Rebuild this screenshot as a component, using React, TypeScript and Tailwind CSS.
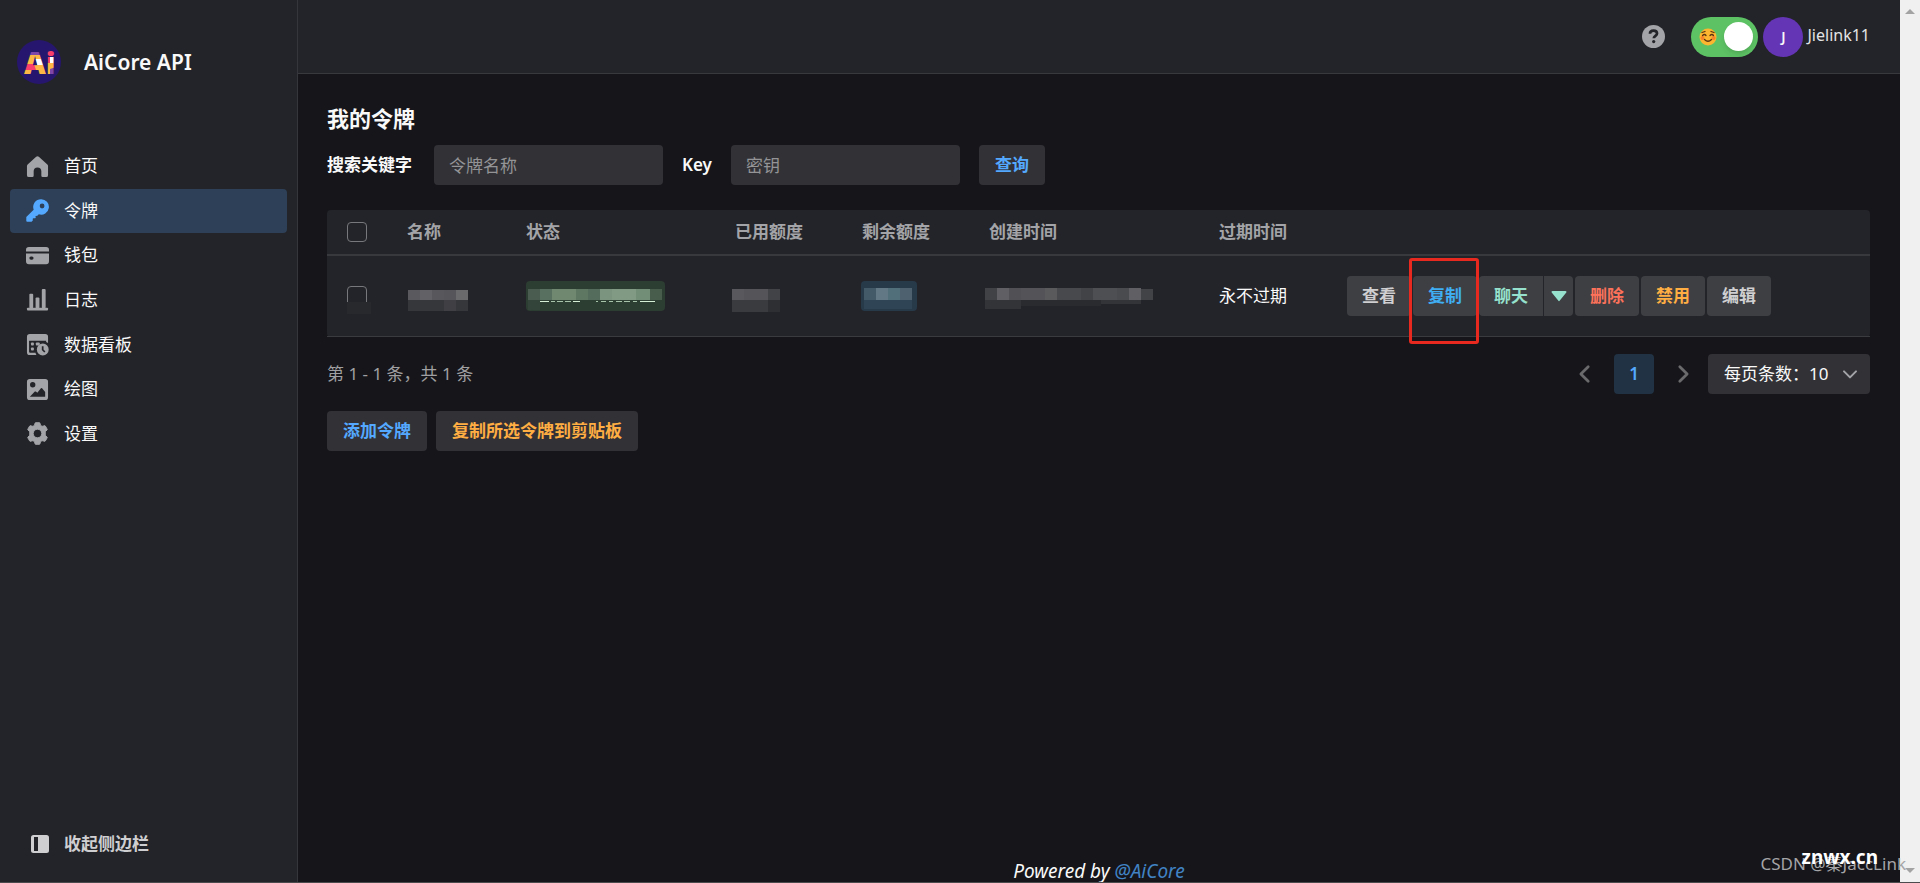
import React, { useState } from 'react';
import clsx from 'clsx';

type IconProps = { className?: string };

function IconHome({ className }: IconProps) {
  return (
    <svg viewBox="0 0 24 24" className={className} fill="currentColor">
      <path d="M10.600 1.900a2 2 0 0 1 2.800 0l8.900 8c.5.4.7 1 .7 1.600V21a2 2 0 0 1-2 2h-3.600a1.400 1.400 0 0 1-1.400-1.400V17a4 4 0 0 0-8 0v4.600A1.400 1.400 0 0 1 6.600 23H3a2 2 0 0 1-2-2v-9.500c0-.6.3-1.200.7-1.600z" />
    </svg>
  );
}

function IconKey({ className }: IconProps) {
  return (
    <svg viewBox="0 0 24 24" className={className} fill="currentColor">
      <path
        fillRule="evenodd"
        d="M15.700.3a8 8 0 1 1-2.300 15.600l-1.900 1.900-1.100-.4-.5.5.3 1.600-.6.6-1.900-.1-.7.7.1 1.700-1.300 1.300H1.300a1 1 0 0 1-1-1v-3.900L8 11.100A8 8 0 0 1 15.700.3zm1.100 4.500a2.500 2.500 0 1 0 0 5 2.500 2.500 0 0 0 0-5z"
      />
    </svg>
  );
}

function IconWallet({ className }: IconProps) {
  return (
    <svg viewBox="0 0 24 24" className={className} fill="currentColor">
      <path d="M3 3h18a3 3 0 0 1 3 3v1.800H0V6a3 3 0 0 1 3-3z" />
      <path
        fillRule="evenodd"
        d="M0 9.800h24V18a3 3 0 0 1-3 3H3a3 3 0 0 1-3-3zm5.200 3.200a1.700 1.700 0 0 0 0 3.400h1a1.700 1.700 0 0 0 0-3.400z"
      />
    </svg>
  );
}

function IconHistogram({ className }: IconProps) {
  return (
    <svg viewBox="0 0 24 24" className={className} fill="currentColor">
      <rect x="1" y="20.500" width="22" height="3" rx="1" />
      <rect x="3.500" y="6" width="4" height="15" rx="1" />
      <rect x="10" y="10" width="4" height="11" rx="1" />
      <rect x="16.500" y="1" width="4" height="20" rx="1" />
    </svg>
  );
}

function IconCalendarClock({ className }: IconProps) {
  return (
    <svg viewBox="0 0 24 24" className={className} fill="currentColor">
      <path
        fillRule="evenodd"
        d="M4 1h16a3 3 0 0 1 3 3v6.500a8 8 0 0 0-2-1V8H3.200v11.200c0 .9.6 1.500 1.500 1.500h5.200c.2.800.6 1.600 1 2.300H4a3 3 0 0 1-3-3V4a3 3 0 0 1 3-3z"
      />
      <rect x="5.200" y="10" width="3" height="3" rx=".8" />
      <rect x="10.300" y="10" width="4" height="3" rx=".8" />
      <rect x="5.200" y="15.200" width="3" height="3" rx=".8" />
      <path
        fillRule="evenodd"
        d="M17.500 11a6.200 6.200 0 1 1 0 12.400 6.200 6.200 0 0 1 0-12.400zm-1 2.800v4l2.500 2.600 1.300-1.200-2-2.100v-3.300z"
      />
    </svg>
  );
}

function IconImage({ className }: IconProps) {
  return (
    <svg viewBox="0 0 24 24" className={className} fill="currentColor">
      <path
        fillRule="evenodd"
        d="M4 1h16a3 3 0 0 1 3 3v16a3 3 0 0 1-3 3H4a3 3 0 0 1-3-3V4a3 3 0 0 1 3-3zm3 3.200a2.800 2.800 0 1 0 0 5.600 2.800 2.800 0 0 0 0-5.600zM4 19.500h16v-5l-3.200-3.700a.8.8 0 0 0-1.200 0l-3.800 4.600-1.500-1.200a.9.9 0 0 0-1.100 0z"
      />
    </svg>
  );
}

function IconSetting({ className }: IconProps) {
  return (
    <svg viewBox="0 0 24 24" className={className} fill="currentColor">
      <path
        fillRule="evenodd"
        stroke="currentColor"
        strokeLinejoin="round"
        d="M9.600.9a11.500 11.500 0 0 1 4.800 0l.9 2.800 1.500.8 3-.7c1.100 1.200 1.900 2.600 2.400 4.200l-2.100 2.200v3.600l2.100 2.200c-.5 1.600-1.300 3-2.400 4.200l-3-.7-1.500.8-.9 2.800a11.500 11.500 0 0 1-4.800 0l-.9-2.800-1.500-.8-3 .7A11.500 11.500 0 0 1 1.800 16l2.100-2.200v-3.600L1.800 8c.5-1.600 1.300-3 2.400-4.200l3 .7 1.500-.8zM12 7.500a4.500 4.500 0 1 0 0 9 4.500 4.500 0 0 0 0-9z"
      />
    </svg>
  );
}

function IconSidebar({ className }: IconProps) {
  return (
    <svg viewBox="0 0 18 18" className={className} fill="currentColor">
      <path
        fillRule="evenodd"
        d="M2.500 0h13A2.500 2.500 0 0 1 18 2.500v13a2.500 2.500 0 0 1-2.500 2.500h-13A2.500 2.500 0 0 1 0 15.500v-13A2.500 2.500 0 0 1 2.500 0zM3 2v14h4V2z"
      />
    </svg>
  );
}

function IconHelp({ className }: IconProps) {
  return (
    <svg viewBox="0 0 24 24" className={className}>
      <circle cx="12" cy="12" r="12" fill="currentColor" />
      <path
        d="M8.300 9.200c0-2 1.600-3.400 3.700-3.400s3.700 1.200 3.700 3.100c0 2.400-3.400 2.500-3.400 5"
        fill="none"
        stroke="#232429"
        strokeWidth="2.800"
      />
      <circle cx="12.200" cy="17.300" r="1.700" fill="#232429" />
    </svg>
  );
}

function Chevron({ className, d }: { className?: string; d: string }) {
  return (
    <svg
      viewBox="0 0 24 24"
      className={className}
      fill="none"
      stroke="currentColor"
      strokeWidth="3"
      strokeLinecap="round"
      strokeLinejoin="round"
    >
      <path d={d} />
    </svg>
  );
}

function Logo() {
  return (
    <svg viewBox="0 0 44 44" className="size-11 shrink-0" role="img" aria-label="AiCore">
      <defs>
        <pattern id="logo-fill" patternUnits="userSpaceOnUse" width="44" height="44">
          <rect width="44" height="44" fill="#fcb745" />
          <rect width="29" height="15" fill="#7d46a8" />
          <path d="M18 19h8l3 6h-9z" fill="#fff" />
          <path d="M0 24h17l2 6H0z" fill="#fb3f6c" />
          <rect x="29" width="15" height="16" fill="#fb3f6c" />
          <rect x="29" y="16" width="4" height="7" fill="#fb3f6c" />
          <rect x="33" y="16" width="11" height="7" fill="#fff" />
          <path d="M33 29l6-2v10h-6z" fill="#7d46a8" />
        </pattern>
      </defs>
      <circle cx="22" cy="22" r="22" fill="#27166d" />
      <text x="7" y="34" fontSize="30" fontWeight="800" fontFamily="Open Sans, sans-serif" fill="url(#logo-fill)">
        Ai
      </text>
    </svg>
  );
}

const NAV_ITEMS = [
  { label: '首页', icon: IconHome },
  { label: '令牌', icon: IconKey },
  { label: '钱包', icon: IconWallet },
  { label: '日志', icon: IconHistogram },
  { label: '数据看板', icon: IconCalendarClock },
  { label: '绘图', icon: IconImage },
  { label: '设置', icon: IconSetting },
];

function Sidebar() {
  const [active, setActive] = useState('令牌');

  return (
    <aside className="flex w-[298px] shrink-0 flex-col border-r border-[#35363b] bg-[#232429] px-[10px]">
      <div className="mt-10 flex items-center gap-[23px] pl-[7px]">
        <Logo />
        <span className="text-[21px] leading-8 font-semibold text-[#f9f9f9]">AiCore API</span>
      </div>
      <nav className="mt-[60px] grid h-78 auto-rows-fr">
        {NAV_ITEMS.map(({ label, icon: Icon }) => (
          <a
            key={label}
            href="#"
            onClick={(e) => {
              e.preventDefault();
              setActive(label);
            }}
            className={clsx(
              'flex items-center gap-[15px] rounded-[4px] pl-4 text-[#f9f9f9]',
              active === label && 'bg-[#2e4057]'
            )}
          >
            <Icon className={clsx('size-[23px]', active === label ? 'text-[#54a9ff]' : 'text-[#a3a4a7]')} />
            {label}
          </a>
        ))}
      </nav>
      <button className="mt-auto mb-[26px] flex items-center gap-[15px] pl-[21px] font-bold text-[#cfcfd1]">
        <IconSidebar className="size-[18px]" />
        收起侧边栏
      </button>
    </aside>
  );
}

function Header() {
  return (
    <header className="flex h-[74px] items-center justify-end border-b border-[#38393d] bg-[#232429] pr-[30px]">
      <button aria-label="帮助" className="mr-[26px] text-[#a3a4a7]">
        <IconHelp className="size-[23px]" />
      </button>
      <label className="relative mr-[5px] block h-10 w-[67px]">
        <input
          type="checkbox"
          defaultChecked
          aria-label="主题"
          className="h-10 w-[67px] appearance-none rounded-full bg-[#5dc264]"
        />
        <svg viewBox="0 0 18 18" className="pointer-events-none absolute top-[11px] left-2 size-[18px]">
          <circle cx="9" cy="9" r="8.500" fill="#fdb62f" />
          <circle cx="3.500" cy="10" r="2" fill="#f7832b" />
          <circle cx="14.500" cy="10" r="2" fill="#f7832b" />
          <path
            d="M3 4.500l3-1M15 4.500l-3-1M3.500 7.500q2-2 3.500 0M11 7.500q2-2 3.500 0M5.500 11.500q3.500 3.500 7 0"
            fill="none"
            stroke="#5a3413"
            strokeWidth="1.300"
            strokeLinecap="round"
          />
        </svg>
        <span className="pointer-events-none absolute top-[5px] right-[5px] size-[29px] rounded-full bg-white shadow-md" />
      </label>
      <span className="mr-1 flex size-10 items-center justify-center rounded-full bg-[#6435b5] text-sm font-semibold text-[#f9f9f9]">
        J
      </span>
      <span className="pb-1 text-base text-[#e4e4e6]">Jielink11</span>
    </header>
  );
}

type Block = [x: number, y: number, w: number, h: number, color: string];

/** Mosaic that hides a private value. */
function Mosaic({ width, height, blocks, className }: { width: number; height: number; blocks: Block[]; className?: string }) {
  return (
    <svg
      width={width}
      height={height}
      viewBox={`0 0 ${width} ${height}`}
      shapeRendering="crispEdges"
      aria-hidden="true"
      className={className}
    >
      {blocks.map(([x, y, w, h, color]) => (
        <rect key={`${x}-${y}`} x={x} y={y} width={w} height={h} fill={color} />
      ))}
    </svg>
  );
}

const NAME_BLOCKS: Block[] = [
  [1, 0, 12, 10, '#5a5a5e'],
  [13, 0, 12, 10, '#626266'],
  [25, 0, 12, 10, '#58585c'],
  [37, 0, 12, 10, '#56565a'],
  [49, 0, 12, 10, '#6a6a6d'],
  [1, 10, 36, 11, '#36373b'],
  [37, 10, 12, 11, '#404044'],
  [49, 10, 12, 11, '#36373b'],
];

const STATUS_BLOCKS: Block[] = [
  [2, 8, 12, 11, '#4a5c50'],
  [14, 8, 12, 11, '#587060'],
  [26, 8, 24, 11, '#70886f'],
  [50, 8, 12, 11, '#5d7763'],
  [62, 8, 12, 11, '#536c5b'],
  [74, 8, 12, 11, '#7b9480'],
  [86, 8, 24, 11, '#809a84'],
  [110, 8, 14, 11, '#738e76'],
  [124, 8, 12, 11, '#495d4d'],
  [2, 19, 12, 10, '#33453a'],
  [14, 20, 9, 1, '#d4efd6'],
  [25, 20, 4, 1, '#a7c4aa'],
  [31, 20, 6, 1, '#a7c4aa'],
  [39, 20, 6, 1, '#a7c4aa'],
  [47, 20, 7, 1, '#d4efd6'],
  [70, 20, 2, 1, '#a7c4aa'],
  [75, 20, 5, 1, '#a7c4aa'],
  [83, 20, 4, 1, '#a7c4aa'],
  [90, 20, 6, 1, '#a7c4aa'],
  [98, 20, 6, 1, '#a7c4aa'],
  [107, 20, 4, 1, '#a7c4aa'],
  [114, 20, 15, 1, '#d4efd6'],
];

const USED_BLOCKS: Block[] = [
  [0, 0, 12, 11, '#59595d'],
  [12, 0, 24, 11, '#545459'],
  [36, 0, 12, 11, '#424347'],
  [0, 11, 36, 12, '#3a3b3f'],
  [36, 11, 12, 12, '#2e2f33'],
];

const REMAIN_BLOCKS: Block[] = [
  [3, 7, 12, 12, '#435a69'],
  [15, 7, 12, 12, '#627985'],
  [27, 7, 12, 12, '#516f7a'],
  [39, 7, 12, 12, '#4d626e'],
  [3, 19, 48, 9, '#2f4455'],
];

const CREATED_BLOCKS: Block[] = [
  [0, 0, 12, 12, '#414246'],
  [12, 0, 12, 12, '#606064'],
  [24, 0, 12, 12, '#515155'],
  [36, 0, 24, 12, '#545458'],
  [60, 0, 12, 12, '#5a5a5d'],
  [72, 0, 24, 12, '#48494c'],
  [96, 0, 12, 12, '#424347'],
  [108, 0, 24, 12, '#4e4f53'],
  [132, 0, 12, 12, '#4a4b4f'],
  [144, 0, 12, 12, '#606064'],
  [156, 1, 12, 11, '#424347'],
  [0, 12, 36, 9, '#333438'],
  [36, 12, 80, 6, '#2a2b2f'],
  [116, 12, 40, 4, '#333438'],
];

const HEADERS = [
  { label: '名称', width: 'w-[119px]' },
  { label: '状态', width: 'w-[209px]' },
  { label: '已用额度', width: 'w-[127px]' },
  { label: '剩余额度', width: 'w-[127px]' },
  { label: '创建时间', width: 'w-[230px]' },
  { label: '过期时间', width: 'w-[128px]' },
  { label: '', width: '' },
];

const checkboxClass = 'block size-5 appearance-none rounded-[4px] border border-[#77787b] checked:bg-[#54a9ff]';
const cellClass = 'h-[81px] border-b border-[#3a3b3f] px-5 py-0';
const actionClass = 'h-10 w-16 rounded-[4px] bg-[#3e3f43] font-bold';
const buttonClass = 'h-10 rounded-[4px] bg-[#323236] px-4 font-bold';
const inputClass =
  'h-10 w-[229px] rounded-[4px] bg-[#323236] px-[15px] text-[#f9f9f9] outline-none placeholder:text-[#949496]';

function TokenTable() {
  return (
    <table className="mt-[25px] w-full table-fixed border-separate border-spacing-0 rounded-[4px] bg-[#232429] text-left">
      <thead>
        <tr>
          <th className="h-[46px] w-[60px] border-b-2 border-[#38393d] px-5 py-0">
            <input type="checkbox" aria-label="全选" className={checkboxClass} />
          </th>
          {HEADERS.map(({ label, width }) => (
            <th key={label} className={clsx('border-b-2 border-[#38393d] px-5 py-0 font-bold text-[#a3a4a7]', width)}>
              {label}
            </th>
          ))}
        </tr>
      </thead>
      <tbody>
        <tr>
          <td className={cellClass}>
            <div className="relative">
              <input type="checkbox" aria-label="选择令牌" className={checkboxClass} />
              <span className="absolute top-4 left-0 h-3 w-6 bg-[#28292d]" />
            </div>
          </td>
          <td className={cellClass}>
            <Mosaic width={61} height={21} blocks={NAME_BLOCKS} className="mt-2" />
          </td>
          <td className={cellClass}>
            <div className="w-[139px] rounded-[4px] bg-[#2c3d32]">
              <Mosaic width={139} height={30} blocks={STATUS_BLOCKS} />
            </div>
          </td>
          <td className={clsx(cellClass, 'pl-[17px]')}>
            <Mosaic width={48} height={23} blocks={USED_BLOCKS} className="mt-2" />
          </td>
          <td className={clsx(cellClass, 'pl-[19px]')}>
            <div className="w-14 rounded-[4px] bg-[#273a49]">
              <Mosaic width={56} height={30} blocks={REMAIN_BLOCKS} />
            </div>
          </td>
          <td className={clsx(cellClass, 'pl-4')}>
            <Mosaic width={168} height={21} blocks={CREATED_BLOCKS} className="mt-1" />
          </td>
          <td className={clsx(cellClass, 'text-[#f9f9f9]')}>永不过期</td>
          <td className={cellClass}>
            <div className="flex gap-[2px]">
              <button className={clsx(actionClass, 'text-[#cfcfd1]')}>查看</button>
              <div className="relative">
                <button className={clsx(actionClass, 'text-[#40aef3]')}>复制</button>
                <span className="pointer-events-none absolute -top-[18px] right-[-2px] -bottom-[28px] left-[-4px] z-10 rounded-[3px] border-3 border-[#e8291f]" />
              </div>
              <div className="flex gap-px">
                <button className={clsx(actionClass, 'rounded-r-none text-[#95e1cd]')}>聊天</button>
                <button
                  aria-label="更多聊天选项"
                  className="flex h-10 w-[29px] items-center justify-center rounded-r-[4px] bg-[#3e3f43] text-[#95e1cd]"
                >
                  <svg viewBox="0 0 16 12" className="h-3 w-4" fill="currentColor">
                    <path d="M1.500 1h13a1 1 0 0 1 .8 1.600l-6.500 8a1 1 0 0 1-1.600 0l-6.500-8A1 1 0 0 1 1.500 1z" />
                  </svg>
                </button>
              </div>
              <button className={clsx(actionClass, 'text-[#fc725a]')}>删除</button>
              <button className={clsx(actionClass, 'text-[#ffae43]')}>禁用</button>
              <button className={clsx(actionClass, 'text-[#cfcfd1]')}>编辑</button>
            </div>
          </td>
        </tr>
      </tbody>
    </table>
  );
}

function Pagination() {
  return (
    <div className="mt-[17px] flex h-10 items-center justify-between">
      <span className="text-[#a0a0a2]">第 1 - 1 条，共 1 条</span>
      <div className="flex items-center gap-[9px]">
        <button aria-label="上一页" className="flex size-10 items-center justify-center text-[#6a6a6d]">
          <Chevron className="size-[22px]" d="M15.500 4l-8 8 8 8" />
        </button>
        <button className="size-10 rounded-[4px] bg-[#213245] font-semibold text-[#54a9ff]">1</button>
        <button aria-label="下一页" className="flex size-10 items-center justify-center text-[#6a6a6d]">
          <Chevron className="size-[22px]" d="M8.500 4l8 8-8 8" />
        </button>
        <div className="relative -ml-1">
          <select
            aria-label="每页条数"
            className="h-10 w-[162px] appearance-none rounded-[4px] bg-[#323236] pl-4 text-[#f9f9f9]"
          >
            <option>每页条数：10</option>
            <option>每页条数：20</option>
            <option>每页条数：50</option>
          </select>
          <Chevron
            className="pointer-events-none absolute top-3 right-3 size-4 text-[#a3a4a7]"
            d="M3 8l9 9 9-9"
          />
        </div>
      </div>
    </div>
  );
}

function Scrollbar() {
  return (
    <div className="flex w-5 shrink-0 flex-col items-center justify-between bg-[#f0f0f0] py-[9px] text-[#a3a3a3]">
      <svg viewBox="0 0 10 5" className="h-[5px] w-[10px]" fill="currentColor">
        <path d="M5 0l5 5H0z" />
      </svg>
      <svg viewBox="0 0 10 5" className="h-[5px] w-[10px]" fill="currentColor">
        <path d="M0 0h10L5 5z" />
      </svg>
    </div>
  );
}

export default function App() {
  return (
    <div className="relative flex min-h-screen overflow-hidden border-b border-[#4b4b4e] bg-[#16161a] font-['Noto_Sans','Noto_Sans_CJK_SC',sans-serif] text-[17px] leading-6">
      <Sidebar />
      <div className="flex min-w-0 flex-1 flex-col">
        <Header />
        <main className="flex-1 pt-7 pr-[30px] pl-[29px]">
          <h1 className="text-[22px] leading-8 font-bold text-[#f9f9f9]">我的令牌</h1>
          <form className="mt-[11px] flex items-center gap-[19px]" onSubmit={(e) => e.preventDefault()}>
            <label htmlFor="keyword" className="w-[88px] font-bold whitespace-nowrap text-[#f9f9f9]">
              搜索关键字
            </label>
            <input id="keyword" placeholder="令牌名称" className={inputClass} />
            <label htmlFor="token" className="font-semibold text-[#f9f9f9]">
              Key
            </label>
            <input id="token" placeholder="密钥" className={inputClass} />
            <button className={clsx(buttonClass, 'text-[#54a9ff]')}>查询</button>
          </form>
          <TokenTable />
          <Pagination />
          <div className="mt-[17px] flex gap-[9px]">
            <button className={clsx(buttonClass, 'text-[#54a9ff]')}>添加令牌</button>
            <button className={clsx(buttonClass, 'text-[#ffae43]')}>复制所选令牌到剪贴板</button>
          </div>
        </main>
        <footer className="text-center text-[19px] leading-[22px] text-[#f9f9f9] italic">
          Powered by{' '}
          <a href="#" className="text-[#4183c4]">
            @AiCore
          </a>
        </footer>
      </div>
      <Scrollbar />
      <span className="absolute right-[14px] bottom-[6px] whitespace-nowrap text-[#a5a5a8]">CSDN @秦JaccLink</span>
      <span className="absolute right-[42px] bottom-[13px] text-[19px] font-bold text-white">znwx.cn</span>
    </div>
  );
}
